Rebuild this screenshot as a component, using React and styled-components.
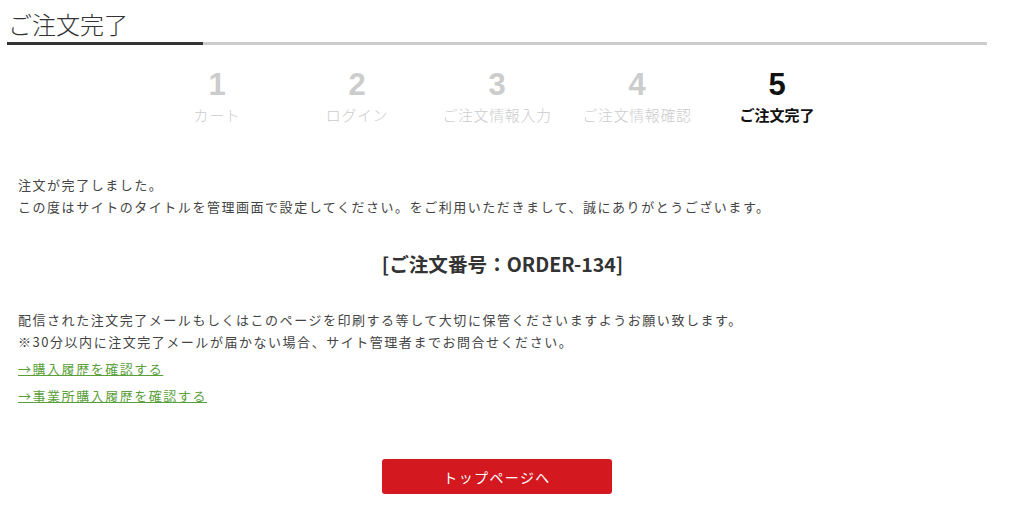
import React from 'react'
import styled, {createGlobalStyle} from 'styled-components'

const GlobalStyle = createGlobalStyle`
body {
    margin: 0;
    background: #fff;
    font-family: "Noto Sans CJK JP", "Noto Sans", sans-serif;
    color: #333;
}
`;

const Page = styled.div`
width: 980px;
padding: 0 0 0 7px;
`;

const TitleBar = styled.div`
border-bottom: 3px solid #cccccc;
position: relative;
padding: 7px 0 2px 1px;
`;

const Title = styled.h1`
margin: 0;
font-size: 24px;
font-weight: 300;
line-height: 33px;
color: #333;
`;

const TitleAccent = styled.div`
position: absolute;
left: 0;
bottom: -3px;
width: 196px;
height: 3px;
background: #333;
`;

const Steps = styled.ol`
list-style: none;
margin: 0;
padding: 22px 0 0;
display: flex;
justify-content: center;
`;

const Step = styled.li`
width: 140px;
display: flex;
flex-direction: column;
align-items: center;
color: ${props => props.active ? "#111" : "#cccccc"};
`;

const StepNum = styled.span`
font-family: "Liberation Sans", Arial, sans-serif;
font-weight: bold;
font-size: 31px;
line-height: 36px;
`;

const StepLabel = styled.span`
font-size: 15px;
line-height: 23px;
letter-spacing: ${props => props.active ? "0" : "0.04em"};
font-weight: ${props => props.active ? "bold" : "300"};
`;

const Body = styled.div`
padding: 48px 0 0 11px;
font-size: 13px;
letter-spacing: 0.118em;
color: #444;
`;

const Text = styled.p`
margin: 0;
line-height: 22px;
`;

const OrderNo = styled.div`
text-align: center;
font-size: 19.6px;
font-weight: bold;
letter-spacing: 0;
color: #333;
margin: 31px 0 30px;
line-height: 30px;
`;

const LinkRow = styled.a`
display: block;
color: #5aa03a;
text-decoration: underline;
line-height: 27px;
cursor: pointer;
&:first-of-type {
    margin-top: 2px;
}
`;

const ButtonRow = styled.div`
display: flex;
justify-content: center;
padding-top: 50px;
`;

const TopButton = styled.button`
width: 230px;
height: 35px;
border: none;
border-radius: 3px;
background: #d3181f;
color: #fff;
font-family: "Noto Sans CJK JP", sans-serif;
font-size: 14px;
letter-spacing: 0.1em;
cursor: pointer;
`;

const steps = ["カート", "ログイン", "ご注文情報入力", "ご注文情報確認", "ご注文完了"];

const App = () => {
    return <Page>
        <GlobalStyle />
        <TitleBar>
            <Title>ご注文完了</Title>
            <TitleAccent />
        </TitleBar>
        <Steps>
            {steps.map((s, i) => <Step key={s} active={i === 4}>
                <StepNum>{i + 1}</StepNum>
                <StepLabel active={i === 4}>{s}</StepLabel>
            </Step>)}
        </Steps>
        <Body>
            <Text>注文が完了しました。</Text>
            <Text>この度はサイトのタイトルを管理画面で設定してください。をご利用いただきまして、誠にありがとうございます。</Text>
            <OrderNo>[ご注文番号：ORDER-134]</OrderNo>
            <Text>配信された注文完了メールもしくはこのページを印刷する等して大切に保管くださいますようお願い致します。</Text>
            <Text>※30分以内に注文完了メールが届かない場合、サイト管理者までお問合せください。</Text>
            <LinkRow>→購入履歴を確認する</LinkRow>
            <LinkRow>→事業所購入履歴を確認する</LinkRow>
        </Body>
        <ButtonRow>
            <TopButton>トップページへ</TopButton>
        </ButtonRow>
    </Page>
}

export default App;
